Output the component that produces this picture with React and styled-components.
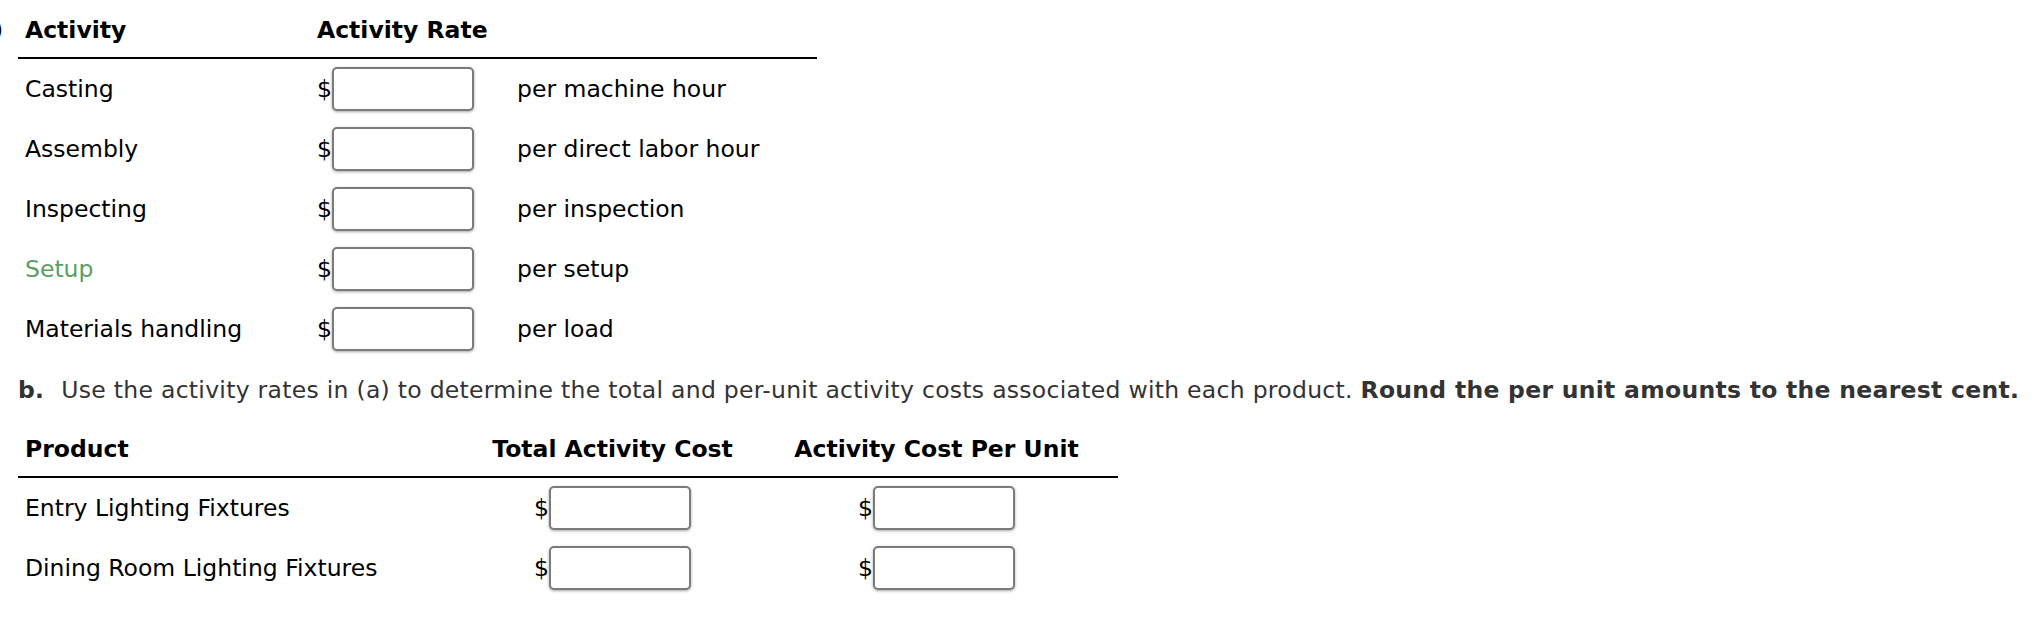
import React from 'react'
import styled, { createGlobalStyle } from 'styled-components'

const GlobalStyle = createGlobalStyle`
  body {
    margin: 0;
    background: #fff;
    font-family: "DejaVu Sans", Verdana, sans-serif;
  }
`;

const activities = [
    { name: 'Casting', unit: 'per machine hour' },
    { name: 'Assembly', unit: 'per direct labor hour' },
    { name: 'Inspecting', unit: 'per inspection' },
    { name: 'Setup', unit: 'per setup', hint: true },
    { name: 'Materials handling', unit: 'per load' },
];

const products = ['Entry Lighting Fixtures', 'Dining Room Lighting Fixtures'];

function Money() {
    return (
        <MoneyBox>
            <span>$</span>
            <Field type="text" />
        </MoneyBox>
    );
}

export default function App() {
    return (
        <Page>
            <GlobalStyle />
            <PartA>
                <Marker><span>)</span></Marker>
                <Grid $cols="292px 200px 307px">
                    <HeadCell $top={15}>Activity</HeadCell>
                    <HeadCell $top={15}>Activity Rate</HeadCell>
                    <HeadCell $top={15}></HeadCell>
                    {activities.map((a) => (
                        <React.Fragment key={a.name}>
                            <Cell $hint={a.hint}>{a.name}</Cell>
                            <Cell><Money /></Cell>
                            <Cell>{a.unit}</Cell>
                        </React.Fragment>
                    ))}
                </Grid>
            </PartA>
            <Instruction>
                <b className="label">b.</b>
                Use the activity rates in (a) to determine the total and per-unit activity costs associated with each product.{' '}
                <b>Round the per unit amounts to the nearest cent.</b>
            </Instruction>
            <PartB>
                <Grid $cols="452px 285px 363px">
                    <HeadCell $top={29}>Product</HeadCell>
                    <HeadCell $top={29} $center>Total Activity Cost</HeadCell>
                    <HeadCell $top={29} $center>Activity Cost Per Unit</HeadCell>
                    {products.map((p) => (
                        <React.Fragment key={p}>
                            <Cell>{p}</Cell>
                            <Cell $center><Money /></Cell>
                            <Cell $center><Money /></Cell>
                        </React.Fragment>
                    ))}
                </Grid>
            </PartB>
        </Page>
    );
}

const Page = styled.div`
width: 2038px;
height: 620px;
overflow: hidden;
background: #fff;
color: #000;
font-size: 23.5px;
`;
const PartA = styled.div`
display: flex;
`;
const Marker = styled.div`
flex: none;
width: 18px;
overflow: hidden;
padding-top: 15px;
line-height: 30px;
span {
    display: inline-block;
    margin-left: -6px;
}
`;
const Grid = styled.div`
display: grid;
grid-template-columns: ${(p) => p.$cols};
grid-auto-rows: auto;
`;
const HeadCell = styled.div`
font-weight: bold;
line-height: 30px;
padding: ${(p) => p.$top}px 7px 12px;
border-bottom: 2px solid #000;
text-align: ${(p) => (p.$center ? 'center' : 'left')};
white-space: nowrap;
`;
const Cell = styled.div`
display: flex;
align-items: center;
justify-content: ${(p) => (p.$center ? 'center' : 'flex-start')};
height: 60px;
padding: 0 7px;
white-space: nowrap;
color: ${(p) => (p.$hint ? '#5a9e62' : '#000')};
`;
const MoneyBox = styled.div`
display: flex;
align-items: center;
span {
    line-height: 30px;
}
`;
const Field = styled.input`
box-sizing: border-box;
width: 142px;
height: 44px;
margin: 0;
border: 2px solid #7b7b7b;
border-radius: 5px;
background: #fff;
box-shadow: 0 1px 3px rgba(0, 0, 0, 0.35);
outline: none;
`;
const Instruction = styled.p`
margin: 16px 0 0 18px;
line-height: 30px;
color: #333;
white-space: nowrap;
letter-spacing: 0.28px;
.label {
    margin-right: 17px;
}
`;
const PartB = styled.div`
padding-left: 18px;
`;
